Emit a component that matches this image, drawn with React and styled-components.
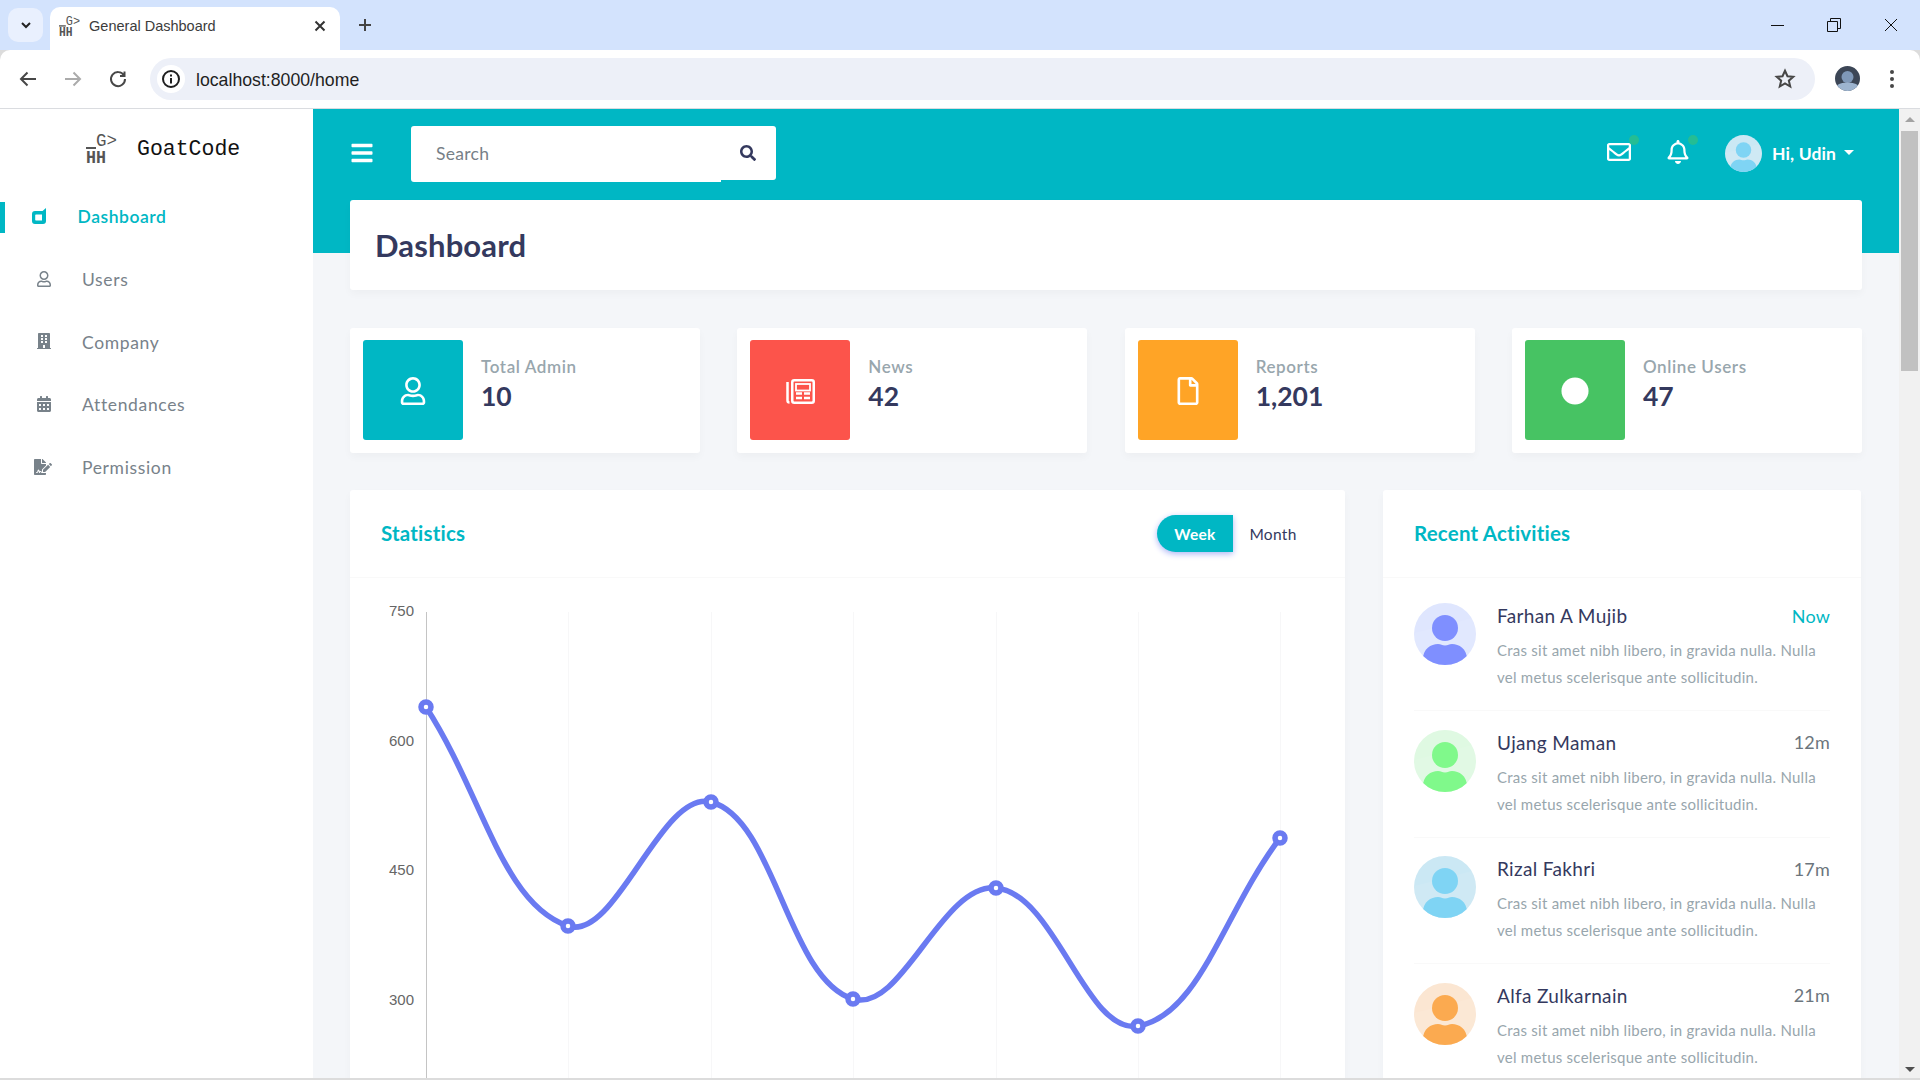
import React from 'react';
import styled, { createGlobalStyle } from 'styled-components';
import {
  FaBars, FaSearch, FaRegEnvelope, FaRegBell, FaRegUser, FaRegFile, FaCircle,
  FaBuilding, FaCalendarAlt, FaFileSignature,
} from 'react-icons/fa';

const TEAL = '#00b7c4';
const INK = '#34395e';
const FONT = 'Lato, "Open Sans", sans-serif';

const GlobalStyle = createGlobalStyle`
  html, body { margin: 0; height: 1080px; overflow: hidden; }
  body { font-family: ${FONT}; background: #fff; }
  * { box-sizing: border-box; }
`;

const Frame = styled.div`
  width: 1920px;
  height: 1080px;
  display: flex;
  flex-direction: column;
  overflow: hidden;
  background: #dcdcdc;
`;

/* browser chrome */
const TabStrip = styled.div`
  height: 50px;
  flex: none;
  background: #d3e3fd;
  display: flex;
  align-items: flex-end;
  padding-left: 8px;
  color: #1f1f1f;
`;
const TabMenu = styled.div`
  width: 35px;
  height: 34px;
  margin: 0 7px 8px 0;
  border-radius: 10px;
  background: #e9f0fe;
  display: flex;
  align-items: center;
  justify-content: center;
`;
const Tab = styled.div`
  width: 290px;
  height: 43px;
  background: #fff;
  border-radius: 10px 10px 0 0;
  display: flex;
  align-items: center;
  padding: 0 12px 5px 9px;
  gap: 9px;
  font: 14.5px "Liberation Sans", Arial, sans-serif;
  color: #3c3c3c;
`;
const TabTitle = styled.span`
  flex: 1;
`;
const NewTab = styled.div`
  margin: 0 0 9px 9px;
  width: 32px;
  height: 32px;
  display: flex;
  align-items: center;
  justify-content: center;
`;
const WindowControls = styled.div`
  margin-left: auto;
  height: 50px;
  display: flex;
  align-items: center;
  padding-right: 22px;
  gap: 43px;
`;
const Toolbar = styled.div`
  height: 59px;
  flex: none;
  background: #fff;
  border-bottom: 1px solid #dadce0;
  border-radius: 10px 10px 0 0;
  display: flex;
  align-items: center;
  padding: 0 0 1px 17px;
`;
const NavButtons = styled.div`
  display: flex;
  align-items: center;
  gap: 23px;
  width: 133px;
`;
const AddressBar = styled.div`
  width: 1665px;
  height: 42px;
  border-radius: 21px;
  background: #edf0f8;
  display: flex;
  align-items: center;
  padding: 0 19px 0 7px;
  font: 17.7px "Liberation Sans", Arial, sans-serif;
  color: #1f1f1f;
`;
const SiteInfo = styled.div`
  width: 28px;
  height: 28px;
  border-radius: 50%;
  background: #fff;
  display: flex;
  align-items: center;
  justify-content: center;
  margin-right: 11px;
`;
const Url = styled.span`
  flex: 1;
  padding-top: 4px;
`;
const ProfileArea = styled.div`
  display: flex;
  align-items: center;
  margin-left: 20px;
  gap: 29px;
`;

/* page */
const Viewport = styled.div`
  height: 969px;
  flex: none;
  display: flex;
  overflow: hidden;
`;
const Page = styled.div`
  width: 1899px;
  flex: none;
  display: flex;
  overflow: hidden;
`;
const Sidebar = styled.aside`
  width: 313px;
  flex: none;
  background: #fff;
  box-shadow: 0 4px 8px rgba(0, 0, 0, 0.03);
`;
const Brand = styled.div`
  height: 78px;
  display: flex;
  align-items: center;
  padding-left: 86px;
  gap: 20px;
  font: 21.5px "Liberation Mono", "DejaVu Sans Mono", monospace;
  color: #111;
`;
const BrandName = styled.span`
  margin-top: 2px;
`;
const Menu = styled.nav`
  margin-top: -1.5px;
  display: flex;
  flex-direction: column;
`;
const MenuItem = styled.div`
  height: 62.7px;
  display: flex;
  align-items: center;
  position: relative;
  font-size: 17.5px;
  letter-spacing: ${(p) => (p.$active ? 0.55 : 0.65)}px;
  font-weight: ${(p) => (p.$active ? 600 : 400)};
  color: ${(p) => (p.$active ? TEAL : '#78828a')};
  padding-left: ${(p) => (p.$active ? 31.5 : 36)}px;
  &::before {
    content: '';
    display: ${(p) => (p.$active ? 'block' : 'none')};
    position: absolute;
    left: 0;
    top: 16px;
    width: 5px;
    height: 31px;
    background: ${TEAL};
  }
`;
const MenuIcon = styled.span`
  width: ${(p) => (p.$wide ? 48 : 46)}px;
  margin-left: ${(p) => (p.$wide ? -2 : 0)}px;
  flex: none;
  display: flex;
  align-items: center;
  font-size: ${(p) => (p.$wide ? 18 : 16)}px;
  margin-top: -2px;
`;
const Main = styled.main`
  flex: 1;
  min-width: 0;
  background: linear-gradient(${TEAL} 144px, #f4f6f9 144px);
  padding: 0 37px;
`;
const Navbar = styled.div`
  height: 91px;
  display: flex;
  align-items: center;
  padding-bottom: 2px;
  color: #fff;
`;
const Burger = styled.div`
  display: flex;
  font-size: 24px;
  margin-right: 37px;
  margin-top: -2px;
`;
const SearchBox = styled.div`
  display: flex;
  width: 365px;
  height: 56px;
`;
const SearchInput = styled.div`
  width: 310px;
  background: #fff;
  border-radius: 3px 0 0 3px;
  padding-left: 25px;
  display: flex;
  align-items: center;
  font-size: 17.5px;
  letter-spacing: 0.3px;
  color: #777f87;
`;
const SearchButton = styled.div`
  width: 55px;
  height: 54px;
  background: #fff;
  border-radius: 0 3px 3px 0;
  display: flex;
  align-items: center;
  justify-content: center;
  padding-right: 2px;
  color: #34395e;
  font-size: 16px;
`;
const NavRight = styled.div`
  margin-left: auto;
  display: flex;
  align-items: center;
`;
const NavIcon = styled.div`
  position: relative;
  display: flex;
  font-size: 24px;
  margin-right: 35px;
  margin-top: -4px;
  &::after {
    content: '';
    position: absolute;
    top: -5px;
    right: -8px;
    width: 10px;
    height: 10px;
    border-radius: 50%;
    background: #47c363;
    opacity: 0.5;
  }
`;
const UserBox = styled.div`
  display: flex;
  align-items: center;
  gap: 10px;
  font-size: 17.5px;
  letter-spacing: 0.1px;
  font-weight: 700;
  margin-right: 8px;
`;
const Caret = styled.span`
  width: 0;
  height: 0;
  border: 5px solid transparent;
  border-top-color: #fff;
  border-bottom: 0;
  margin-left: -2px;
  margin-top: -2px;
`;
const Card = styled.div`
  background: #fff;
  border-radius: 3px;
  box-shadow: 0 4px 8px rgba(0, 0, 0, 0.03);
`;
const PageHeader = styled(Card)`
  height: 90px;
  display: flex;
  align-items: center;
  padding-left: 25px;
`;
const PageTitle = styled.h1`
  margin: 0;
  font-size: 31px;
  font-weight: 700;
  letter-spacing: 0.15px;
  color: ${INK};
`;
const StatGrid = styled.div`
  display: grid;
  grid-template-columns: repeat(4, 350px);
  justify-content: space-between;
  margin-top: 38px;
`;
const StatCard = styled(Card)`
  height: 125px;
  display: flex;
  align-items: center;
  padding: 0 0 2px 13px;
`;
const StatIcon = styled.div`
  width: 100px;
  height: 100px;
  border-radius: 3px;
  background: ${(p) => p.$color};
  color: #fff;
  font-size: 28px;
  display: flex;
  align-items: center;
  justify-content: center;
  padding-top: 3px;
`;
const StatBody = styled.div`
  margin-left: 18px;
  margin-top: -11px;
`;
const StatLabel = styled.div`
  font-size: 17px;
  font-weight: 600;
  letter-spacing: 0.6px;
  color: #98a6ad;
  line-height: 22px;
`;
const StatValue = styled.div`
  font-size: 26.5px;
  font-weight: 700;
  color: ${INK};
  line-height: 34px;
  margin-top: 1px;
`;
const Columns = styled.div`
  display: grid;
  grid-template-columns: 995px 478px;
  column-gap: 38px;
  margin-top: 37px;
`;
const Panel = styled(Card)`
  height: 700px;
  overflow: hidden;
`;
const PanelHead = styled.div`
  height: 88px;
  border-bottom: 1px solid #f9f9f9;
  display: flex;
  align-items: center;
  padding: 0 32px 0 31px;
  justify-content: space-between;
`;
const PanelTitle = styled.h4`
  margin: -2px 0 0;
  font-size: 20.5px;
  font-weight: 700;
  letter-spacing: 0.2px;
  color: ${TEAL};
`;
const Segments = styled.div`
  display: flex;
  align-items: center;
  font-size: 15.5px;
  letter-spacing: 0.3px;
`;
const Segment = styled.div`
  width: ${(p) => (p.$on ? 76 : 80)}px;
  height: 37px;
  display: flex;
  align-items: center;
  justify-content: center;
  color: ${(p) => (p.$on ? '#fff' : INK)};
  font-weight: ${(p) => (p.$on ? 700 : 400)};
  background: ${(p) => (p.$on ? TEAL : 'transparent')};
  border-radius: ${(p) => (p.$on ? '30px 0 0 30px' : '0')};
  box-shadow: ${(p) => (p.$on ? '0 2px 6px #acb5f6' : 'none')};
`;
const ChartSvg = styled.svg`
  display: block;
`;
const ActivityList = styled.div`
  padding: 25px 31px 0;
`;
const Activity = styled.div`
  display: flex;
  height: 107px;
  & + & {
    height: 126.7px;
    border-top: 1px solid #f9f9f9;
    padding-top: 18.5px;
  }
`;
const ActivityBody = styled.div`
  margin-left: 21px;
  flex: 1;
`;
const ActivityHead = styled.div`
  display: flex;
  justify-content: space-between;
  align-items: center;
  height: 27px;
  margin-top: -1px;
`;
const Name = styled.span`
  font-size: 19px;
  letter-spacing: 0.35px;
  color: ${INK};
`;
const When = styled.span`
  font-size: 18px;
  letter-spacing: 0.2px;
  color: ${(p) => (p.$now ? TEAL : '#6c757d')};
`;
const Desc = styled.p`
  margin: 8px 0 0;
  font-size: 15px;
  letter-spacing: 0.25px;
  line-height: 27px;
  color: #98a6ad;
`;

/* scrollbar */
const Scrollbar = styled.div`
  width: 21px;
  flex: none;
  background: #f1f1f1;
  display: flex;
  flex-direction: column;
  align-items: center;
  justify-content: space-between;
  padding: 6px 0;
`;
const ScrollTop = styled.div`
  display: flex;
  flex-direction: column;
  align-items: center;
  width: 100%;
`;
const Thumb = styled.div`
  width: 17px;
  height: 240px;
  background: #c1c1c1;
  margin-top: 9px;
`;
const Arrow = styled.span`
  width: 0;
  height: 0;
  border-left: 5px solid transparent;
  border-right: 5px solid transparent;
  ${(p) => (p.$down ? 'border-top: 5px solid #505050;' : 'border-bottom: 5px solid #a3a3a3;')}
  margin-top: 2px;
`;

const GoatLogo = ({ size = 1 }) => (
  <svg width={31 * size} height={39 * size} viewBox="0 -4 31 39" fill="#555" style={{ flex: 'none' }}>
    <text x="10" y="13" fontFamily='"Liberation Mono", monospace' fontSize="18" textLength="21" lengthAdjust="spacingAndGlyphs">G&gt;</text>
    <rect x="0" y="14" width="10" height="2" />
    <text x="0" y="30" fontFamily='"Liberation Mono", monospace' fontWeight="700" fontSize="18" textLength="20" lengthAdjust="spacingAndGlyphs">HH</text>
  </svg>
);

const DashIcon = () => (
  <svg width="14" height="16" viewBox="0 0 14 16" fill={TEAL}>
    <path d="M14 0v13a3 3 0 0 1-3 3H3a3 3 0 0 1-3-3V6a3 3 0 0 1 3-3h7.5zM4 6.5a.8.8 0 0 0-.8.8v4.5a.8.8 0 0 0 .8.8h6V6.5z" fillRule="evenodd" />
  </svg>
);

const NewsIcon = () => (
  <svg width="29" height="25" viewBox="0 0 29 25" fill="none" stroke="#fff">
    <path d="M1.5 3v18.5a2 2 0 0 0 2 2" strokeWidth="2.5" />
    <rect x="6.25" y="1.25" width="21.5" height="22.5" rx="2" strokeWidth="2.5" />
    <rect x="10" y="5" width="14" height="6.5" strokeWidth="1.8" />
    <path d="M10 14.5h6M18 14.5h6M10 19h6M18 19h6" strokeWidth="2.4" />
  </svg>
);

const Avatar = ({ color, bg, size = 62 }) => (
  <svg width={size} height={size} viewBox="0 0 62 62" style={{ flex: 'none' }}>
    <clipPath id={`clip${color.slice(1)}${size}`}>
      <circle cx="31" cy="31" r="31" />
    </clipPath>
    <g clipPath={`url(#clip${color.slice(1)}${size})`}>
      <rect width="62" height="62" fill={bg} />
      <path d="M0 30L62 14V62H0z" fill="#fff" opacity="0.08" />
      <circle cx="31" cy="25" r="13" fill={color} />
      <path d="M9 62V56c0-10 8-15 15-15 3 0 4 1.5 7 1.5s4-1.5 7-1.5c7 0 15 5 15 15v6z" fill={color} />
    </g>
  </svg>
);

const BrowserAvatar = () => (
  <svg width="25" height="25" viewBox="0 0 25 25">
    <clipPath id="ba"><circle cx="12.5" cy="12.5" r="12.5" /></clipPath>
    <g clipPath="url(#ba)">
      <rect width="25" height="25" fill="#3c4656" />
      <circle cx="12.5" cy="11" r="6" fill="#7f98b8" />
      <path d="M0 25v-3c3-5 8-5.5 12.5-5.5S22 17 25 22v3z" fill="#9db4cf" />
    </g>
  </svg>
);

const menu = [
  { label: 'Dashboard', icon: <DashIcon />, active: true },
  { label: 'Users', icon: <FaRegUser /> },
  { label: 'Company', icon: <FaBuilding /> },
  { label: 'Attendances', icon: <FaCalendarAlt /> },
  { label: 'Permission', icon: <FaFileSignature />, wide: true },
];

const stats = [
  { label: 'Total Admin', value: '10', color: TEAL, icon: <FaRegUser /> },
  { label: 'News', value: '42', color: '#fc544b', icon: <NewsIcon /> },
  { label: 'Reports', value: '1,201', color: '#ffa426', icon: <FaRegFile /> },
  { label: 'Online Users', value: '47', color: '#47c363', icon: <FaCircle /> },
];

const activities = [
  { name: 'Farhan A Mujib', when: 'Now', color: '#7f8fff', bg: '#dfe6fe', now: true },
  { name: 'Ujang Maman', when: '12m', color: '#80f98b', bg: '#dff9e2' },
  { name: 'Rizal Fakhri', when: '17m', color: '#7fd4f4', bg: '#cbe8f4' },
  { name: 'Alfa Zulkarnain', when: '21m', color: '#fbaa50', bg: '#fbe6d2' },
];

// chart coordinates are relative to the panel, below its header
const points = [
  [76, 129], [218, 348], [361, 224], [503, 421], [646, 310], [788, 448], [930, 260],
];
const gridX = [218, 361, 503, 646, 788, 930];
const ticks = [['750', 33], ['600', 163], ['450', 292], ['300', 422]];

function splinePath(pts, t = 0.4) {
  const dist = (a, b) => Math.hypot(a[0] - b[0], a[1] - b[1]);
  const cps = pts.map((p, i) => {
    const prev = pts[i - 1] || p;
    const next = pts[i + 1] || p;
    const d01 = dist(prev, p);
    const d12 = dist(p, next);
    const s01 = d01 / (d01 + d12);
    const s12 = d12 / (d01 + d12);
    return {
      in: [p[0] - t * s01 * (next[0] - prev[0]), p[1] - t * s01 * (next[1] - prev[1])],
      out: [p[0] + t * s12 * (next[0] - prev[0]), p[1] + t * s12 * (next[1] - prev[1])],
    };
  });
  let d = `M${pts[0][0]} ${pts[0][1]}`;
  for (let i = 1; i < pts.length; i += 1) {
    const a = cps[i - 1].out;
    const b = cps[i].in;
    d += ` C${a[0]} ${a[1]} ${b[0]} ${b[1]} ${pts[i][0]} ${pts[i][1]}`;
  }
  return d;
}

function Chart() {
  return (
    <ChartSvg width="995" height="612" viewBox="0 0 995 612">
      {gridX.map((x) => <line key={x} x1={x + 0.5} x2={x + 0.5} y1="34" y2="612" stroke="#f7f7f8" />)}
      <line x1="76.5" x2="76.5" y1="34" y2="612" stroke="#c4c4c4" />
      {ticks.map(([label, y]) => (
        <text key={label} x="64" y={y + 5} textAnchor="end" fontFamily='"Liberation Sans", Arial, sans-serif' fontSize="15" fill="#666">{label}</text>
      ))}
      <path d={splinePath(points)} fill="none" stroke="#6a7af1" strokeWidth="5.5" />
      {points.map(([x, y]) => (
        <circle key={x} cx={x} cy={y} r="5" fill="#fff" stroke="#6a7af1" strokeWidth="5.5" />
      ))}
    </ChartSvg>
  );
}

export default function App() {
  return (
    <Frame>
      <GlobalStyle />
      <TabStrip>
        <TabMenu>
          <svg width="14" height="14" viewBox="0 0 14 14" fill="none" stroke="#222" strokeWidth="2"><path d="M3 5l4 4 4-4" /></svg>
        </TabMenu>
        <Tab>
          <GoatLogo size={0.68} />
          <TabTitle>General Dashboard</TabTitle>
          <svg width="16" height="16" viewBox="0 0 16 16" stroke="#333" strokeWidth="2"><path d="M3.5 3.5l9 9M12.5 3.5l-9 9" /></svg>
        </Tab>
        <NewTab>
          <svg width="16" height="16" viewBox="0 0 16 16" stroke="#444" strokeWidth="2"><path d="M8 2v12M2 8h12" /></svg>
        </NewTab>
        <WindowControls>
          <svg width="14" height="14" viewBox="0 0 14 14" stroke="#111"><path d="M1 7.5h13" /></svg>
          <svg width="14" height="14" viewBox="0 0 14 14" fill="none" stroke="#111"><path d="M.5 3.5h10v10H.5zM3.5 3.5v-3h10v10h-3" /></svg>
          <svg width="14" height="14" viewBox="0 0 14 14" stroke="#111"><path d="M1 1l12 12M13 1L1 13" /></svg>
        </WindowControls>
      </TabStrip>
      <Toolbar>
        <NavButtons>
          <svg width="22" height="22" viewBox="0 0 22 22" fill="none" stroke="#474747" strokeWidth="2"><path d="M19 11H4M10.5 4.5L4 11l6.5 6.5" /></svg>
          <svg width="22" height="22" viewBox="0 0 22 22" fill="none" stroke="#ababab" strokeWidth="2"><path d="M3 11h15M11.5 4.5L18 11l-6.5 6.5" /></svg>
          <svg width="22" height="22" viewBox="0 0 22 22" fill="none" stroke="#474747" strokeWidth="2"><path d="M17 7.5A7 7 0 1 0 18 11M17.5 3.5V8H13" /></svg>
        </NavButtons>
        <AddressBar>
          <SiteInfo>
            <svg width="20" height="20" viewBox="0 0 20 20" fill="none" stroke="#1f1f1f" strokeWidth="2"><circle cx="10" cy="10" r="8" /><path d="M10 9v5.5M10 5.5v2" /></svg>
          </SiteInfo>
          <Url>localhost:8000/home</Url>
          <svg width="22" height="22" viewBox="0 0 24 24" fill="none" stroke="#474747" strokeWidth="2.2"><path d="M12 3l2.7 6 6.3.6-4.8 4.2 1.5 6.4L12 16.9l-5.7 3.3 1.5-6.4L3 9.6 9.3 9z" /></svg>
        </AddressBar>
        <ProfileArea>
          <BrowserAvatar />
          <svg width="6" height="20" viewBox="0 0 6 20" fill="#474747"><circle cx="3" cy="3" r="2" /><circle cx="3" cy="10" r="2" /><circle cx="3" cy="17" r="2" /></svg>
        </ProfileArea>
      </Toolbar>
      <Viewport>
        <Page>
          <Sidebar>
            <Brand>
              <GoatLogo />
              <BrandName>GoatCode</BrandName>
            </Brand>
            <Menu>
              {menu.map((item) => (
                <MenuItem key={item.label} $active={item.active}>
                  <MenuIcon $wide={item.wide}>{item.icon}</MenuIcon>
                  {item.label}
                </MenuItem>
              ))}
            </Menu>
          </Sidebar>
          <Main>
            <Navbar>
              <Burger><FaBars /></Burger>
              <SearchBox>
                <SearchInput>Search</SearchInput>
                <SearchButton><FaSearch /></SearchButton>
              </SearchBox>
              <NavRight>
                <NavIcon><FaRegEnvelope /></NavIcon>
                <NavIcon><FaRegBell /></NavIcon>
                <UserBox>
                  <Avatar color="#7fd4f4" bg="#cbe8f4" size={37} />
                  Hi, Udin
                  <Caret />
                </UserBox>
              </NavRight>
            </Navbar>
            <PageHeader>
              <PageTitle>Dashboard</PageTitle>
            </PageHeader>
            <StatGrid>
              {stats.map((s) => (
                <StatCard key={s.label}>
                  <StatIcon $color={s.color}>{s.icon}</StatIcon>
                  <StatBody>
                    <StatLabel>{s.label}</StatLabel>
                    <StatValue>{s.value}</StatValue>
                  </StatBody>
                </StatCard>
              ))}
            </StatGrid>
            <Columns>
              <Panel>
                <PanelHead>
                  <PanelTitle>Statistics</PanelTitle>
                  <Segments>
                    <Segment $on>Week</Segment>
                    <Segment>Month</Segment>
                  </Segments>
                </PanelHead>
                <Chart />
              </Panel>
              <Panel>
                <PanelHead>
                  <PanelTitle>Recent Activities</PanelTitle>
                </PanelHead>
                <ActivityList>
                  {activities.map((a) => (
                    <Activity key={a.name}>
                      <Avatar color={a.color} bg={a.bg} />
                      <ActivityBody>
                        <ActivityHead>
                          <Name>{a.name}</Name>
                          <When $now={a.now}>{a.when}</When>
                        </ActivityHead>
                        <Desc>Cras sit amet nibh libero, in gravida nulla. Nulla vel metus scelerisque ante sollicitudin.</Desc>
                      </ActivityBody>
                    </Activity>
                  ))}
                </ActivityList>
              </Panel>
            </Columns>
          </Main>
        </Page>
        <Scrollbar>
          <ScrollTop>
            <Arrow />
            <Thumb />
          </ScrollTop>
          <Arrow $down />
        </Scrollbar>
      </Viewport>
    </Frame>
  );
}
